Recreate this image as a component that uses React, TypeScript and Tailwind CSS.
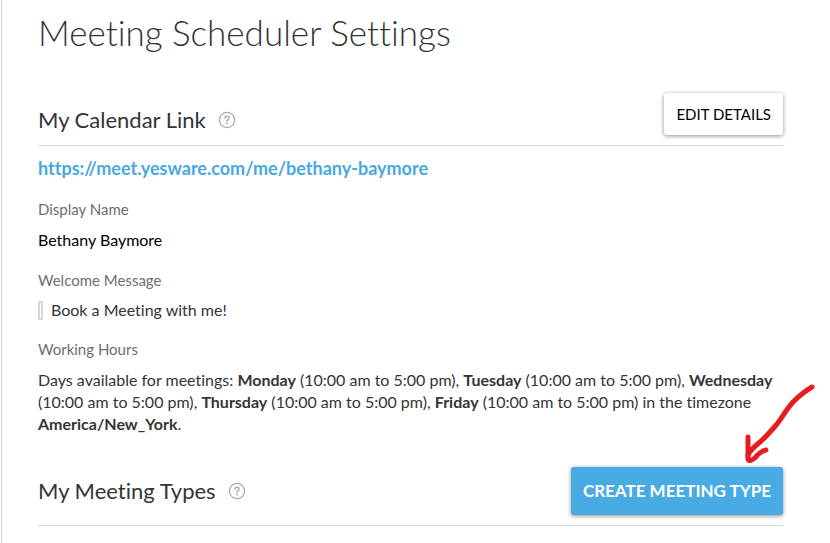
import React from 'react';
import clsx from 'clsx';

interface WorkingDay {
  day: string;
  hours: string;
}

const workingDays: WorkingDay[] = [
  { day: 'Monday', hours: '10:00 am to 5:00 pm' },
  { day: 'Tuesday', hours: '10:00 am to 5:00 pm' },
  { day: 'Wednesday', hours: '10:00 am to 5:00 pm' },
  { day: 'Thursday', hours: '10:00 am to 5:00 pm' },
  { day: 'Friday', hours: '10:00 am to 5:00 pm' },
];

const HelpIcon: React.FC = () => (
  <svg viewBox="0 0 18 18" className="w-[18px] h-[18px] shrink-0" fill="none" stroke="#a9abae" strokeLinecap="round" aria-hidden="true">
    <circle cx="9" cy="9" r="7.6" strokeWidth="1.3" />
    <path d="M6.9 7.3c0-1.3.9-2.1 2.1-2.1s2.1.8 2.1 1.9c0 1.4-2.1 1.6-2.1 3.1" strokeWidth="1.4" />
    <circle cx="9" cy="12.5" r=".9" fill="#a9abae" stroke="none" />
  </svg>
);

interface SectionHeaderProps {
  title: string;
  align: 'end' | 'center';
  children: React.ReactNode;
}

const SectionHeader: React.FC<SectionHeaderProps> = ({ title, align, children }) => (
  <div className={clsx('flex justify-between border-b border-[#d8d9da] pb-[10px]', align === 'end' ? 'items-end' : 'items-center')}>
    <div className="flex items-center gap-3">
      <h2 className="text-[22px] leading-[30px]">{title}</h2>
      <HelpIcon />
    </div>
    {children}
  </div>
);

const FieldLabel: React.FC<{ children: React.ReactNode }> = ({ children }) => (
  <dt className="text-[15px] leading-[22px] text-[#6d6e70]">{children}</dt>
);

export default function App() {
  return (
    <div className="min-h-screen bg-white pl-px">
      <main className="min-h-screen border-l border-[#d4d4d4] pl-9 pr-[47px] pt-2 font-['Lato',sans-serif] [font-variant-ligatures:none] text-[#333536]">
        <h1 className="text-[35px] leading-[48px] font-light">Meeting Scheduler Settings</h1>

        <section className="pt-[37px]">
          <SectionHeader title="My Calendar Link" align="end">
            <button className="h-[42px] px-3 rounded-[3px] bg-white text-black text-[15px] shadow-[0_1px_4px_rgba(0,0,0,0.45)]">
              EDIT DETAILS
            </button>
          </SectionHeader>

          <a href="https://meet.yesware.com/me/bethany-baymore" className="inline-block mt-[11px] text-[18px] leading-[22px] font-bold text-[#48a9e2]">
            https://meet.yesware.com/me/bethany-baymore
          </a>

          <dl className="mt-[17px] text-[16px] leading-[22px]">
            <FieldLabel>Display Name</FieldLabel>
            <dd className="mt-[9px] text-black">Bethany Baymore</dd>
            <div className="mt-[18px]">
              <FieldLabel>Welcome Message</FieldLabel>
              <dd className="mt-2 flex items-center gap-2">
                <span className="w-[5px] h-[19px] border-2 border-[#d5d9dc]" />
                Book a Meeting with me!
              </dd>
            </div>
            <div className="mt-[17px]">
              <FieldLabel>Working Hours</FieldLabel>
              <dd className="mt-[9px]">
                Days available for meetings:{' '}
                {workingDays.map(({ day, hours }, i) => (
                  <React.Fragment key={day}>
                    <strong>{day}</strong> ({hours}){i < workingDays.length - 1 ? ', ' : ' '}
                  </React.Fragment>
                ))}
                in the timezone <strong>America/New_York</strong>.
              </dd>
            </div>
          </dl>
        </section>

        <section className="pt-8">
          <SectionHeader title="My Meeting Types" align="center">
            <div className="relative">
              <button className="h-[48px] px-3 rounded-[3px] bg-[#48abe4] text-white text-[17px] font-bold shadow-[0_1px_4px_rgba(0,0,0,0.45)]">
                CREATE MEETING TYPE
              </button>
              <svg viewBox="0 0 72 82" className="absolute -right-8 bottom-[50px] w-[72px] h-[82px]" fill="none" stroke="#e81c20" strokeWidth="5" strokeLinecap="round" strokeLinejoin="round" aria-hidden="true">
                <path d="M69 4C62 8 55 14 50 19C42 28 39 35 34 41C28 48 23 54 17 59C11 64 7 67 5 72" />
                <path d="M5 54V76C6 79 9 77 12 75C15 71 19 68 23 67" />
              </svg>
            </div>
          </SectionHeader>
        </section>
      </main>
    </div>
  );
}
